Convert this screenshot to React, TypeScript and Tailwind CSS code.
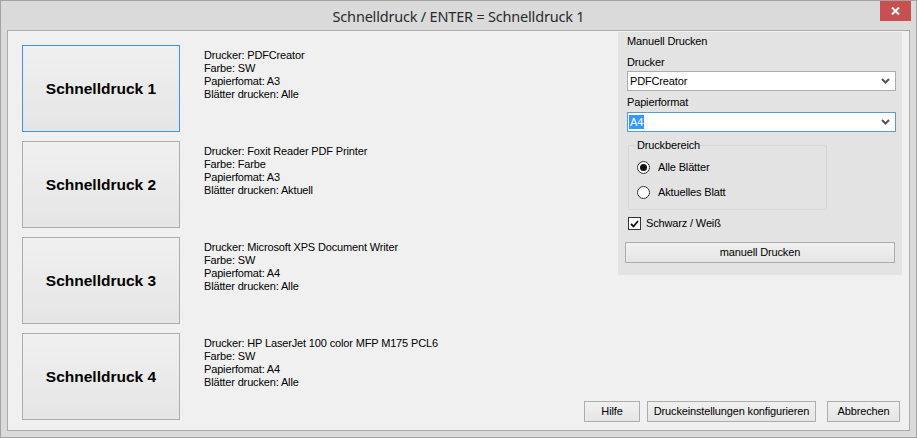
import React from "react";

const rows = [
  { n: 1, lines: ["Drucker: PDFCreator", "Farbe: SW", "Papierfomat: A3", "Blätter drucken: Alle"] },
  { n: 2, lines: ["Drucker: Foxit Reader PDF Printer", "Farbe: Farbe", "Papierfomat: A3", "Blätter drucken: Aktuell"] },
  { n: 3, lines: ["Drucker: Microsoft XPS Document Writer", "Farbe: SW", "Papierfomat: A4", "Blätter drucken: Alle"] },
  { n: 4, lines: ["Drucker: HP LaserJet 100 color MFP M175 PCL6", "Farbe: SW", "Papierfomat: A4", "Blätter drucken: Alle"] },
];

const font = { fontFamily: '"Liberation Sans", Arial, sans-serif' };

function Chevron() {
  return (
    <svg width="9" height="6" viewBox="0 0 9 6" className="mr-[5px]">
      <path d="M1 1 L4.5 4.5 L8 1" stroke="#555" strokeWidth="2" fill="none" />
    </svg>
  );
}

function WinButton({ children, className }: { children: React.ReactNode; className?: string }) {
  return (
    <div
      className={
        "flex items-center justify-center border border-[#acacac] bg-gradient-to-b from-[#f0f0f0] to-[#e5e5e5] text-[11px] tracking-[-0.15px] text-black " +
        (className || "")
      }
    >
      {children}
    </div>
  );
}

export default function App() {
  return (
    <div
      className="w-[917px] h-[438px] bg-[#dadada] border border-[#a3a3a3] flex flex-col overflow-hidden"
      style={font}
    >
      <div className="relative h-[29px] flex items-center justify-center shrink-0">
        <span
          className="text-[14.5px] tracking-[-0.2px] text-[#2b2b2b] leading-none mt-[1px]"
          style={{ fontFamily: '"Noto Sans", "Open Sans", sans-serif' }}
        >
          Schnelldruck / ENTER = Schnelldruck 1
        </span>
        <div className="absolute top-0 right-[5px] w-[31px] h-[20px] bg-[#c75050] flex items-center justify-center">
          <svg width="9" height="8" viewBox="0 0 9 8">
            <path d="M1 0.5 L8 7.5 M8 0.5 L1 7.5" stroke="#fff" strokeWidth="2" />
          </svg>
        </div>
      </div>
      <div className="mx-[6px] h-[401px] border border-[#ababab] bg-[#f0f0f0] flex shrink-0">
        <div className="flex-1 flex flex-col gap-[9px] pl-[14px] pt-[14px]">
          {rows.map((r) => (
            <div key={r.n} className="flex items-start">
              <div
                className={
                  "w-[158px] h-[87px] shrink-0 flex items-center justify-center bg-gradient-to-b from-[#f0f0f0] to-[#e5e5e5] border " +
                  (r.n === 1 ? "border-[#3c96e8]" : "border-[#acacac]")
                }
              >
                <span className="text-[15.5px] font-bold text-black">Schnelldruck {r.n}</span>
              </div>
              <div className="ml-[24px] mt-[4px] text-[11px] tracking-[-0.15px] leading-[13px] text-black">
                {r.lines.map((l) => (
                  <div key={l}>{l}</div>
                ))}
              </div>
            </div>
          ))}
        </div>
        <div className="w-[325px] shrink-0 flex flex-col justify-between">
          <div className="ml-auto mr-[7px] mt-[1px] w-[284px] h-[243px] bg-[#e3e3e3] flex flex-col text-[11px] tracking-[-0.15px] leading-[13px] text-black">
            <div className="ml-[9px] mt-[3px]">Manuell Drucken</div>
            <div className="ml-[9px] mt-[8px]">Drucker</div>
            <div className="ml-[9px] mt-[2px] w-[269px] h-[20px] bg-white border border-[#adadad] flex items-center justify-between">
              <span className="ml-[2px]">PDFCreator</span>
              <Chevron />
            </div>
            <div className="ml-[9px] mt-[5px]">Papierformat</div>
            <div className="ml-[9px] mt-[3px] w-[269px] h-[20px] bg-white border border-[#5a9ad8] flex items-center justify-between">
              <span className="ml-[1px] bg-[#3399ff] text-white px-[1px] leading-[14px]">A4</span>
              <Chevron />
            </div>
            <div className="relative ml-[10px] mt-[13px] w-[199px] h-[65px] border border-[#d5d5d5] rounded-[2px]">
              <span className="absolute left-[7px] top-[-7px] bg-[#e3e3e3] px-[1px]">Druckbereich</span>
              <div className="flex items-center mt-[15px] ml-[8px]">
                <div className="w-[13px] h-[13px] rounded-full border border-[#333] bg-white flex items-center justify-center">
                  <div className="w-[7px] h-[7px] rounded-full bg-[#111]" />
                </div>
                <span className="ml-[8px]">Alle Blätter</span>
              </div>
              <div className="flex items-center mt-[12px] ml-[8px]">
                <div className="w-[13px] h-[13px] rounded-full border border-[#333] bg-white" />
                <span className="ml-[8px]">Aktuelles Blatt</span>
              </div>
            </div>
            <div className="flex items-center ml-[10px] mt-[7px]">
              <div className="w-[13px] h-[13px] border border-[#333] bg-white flex items-center justify-center">
                <svg width="9" height="8" viewBox="0 0 9 8">
                  <path d="M1 4 L3.5 6.5 L8 1" stroke="#111" strokeWidth="1.8" fill="none" />
                </svg>
              </div>
              <span className="ml-[5px]">Schwarz / Weiß</span>
            </div>
            <WinButton className="ml-[7px] mt-[12px] w-[270px] h-[21px]">manuell Drucken</WinButton>
          </div>
          <div className="flex justify-end pr-[9px] pb-[8px]">
            <WinButton className="w-[56px] h-[21px]">Hilfe</WinButton>
            <WinButton className="ml-[7px] w-[169px] h-[21px]">Druckeinstellungen konfigurieren</WinButton>
            <WinButton className="ml-[11px] w-[73px] h-[21px]">Abbrechen</WinButton>
          </div>
        </div>
      </div>
    </div>
  );
}
